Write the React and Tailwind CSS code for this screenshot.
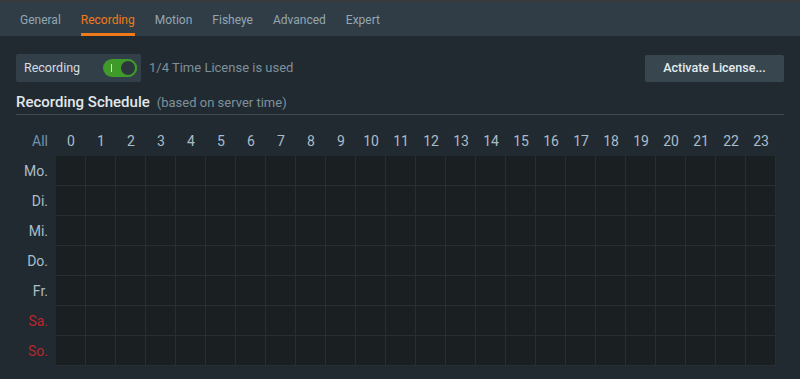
import { useState } from 'react';

const tabs = ['General', 'Recording', 'Motion', 'Fisheye', 'Advanced', 'Expert'];
const hours = Array.from({ length: 24 }, (_, i) => i);
const days = [
  { label: 'Mo.', weekend: false },
  { label: 'Di.', weekend: false },
  { label: 'Mi.', weekend: false },
  { label: 'Do.', weekend: false },
  { label: 'Fr.', weekend: false },
  { label: 'Sa.', weekend: true },
  { label: 'So.', weekend: true },
];

function Toggle() {
  return (
    <div className="relative w-[34px] h-[18px] rounded-full bg-[#3f9a2a]">
      <span className="absolute left-[8px] top-[5px] w-px h-[8px] bg-[#c9e8bf]" />
      <span className="absolute right-0 top-0 w-[18px] h-[18px] rounded-full bg-[#2b363d] border-2 border-[#3f9a2a]" />
    </div>
  );
}

export default function App() {
  const [active] = useState('Recording');

  return (
    <div
      className="w-[800px] h-[379px] bg-[#222a31] overflow-hidden"
      style={{ fontFamily: 'Roboto, "Noto Sans", sans-serif' }}
    >
      <div className="h-[2px] bg-[#3a3b3d]" />
      <div className="h-[34px] bg-[#303d46] flex items-stretch gap-[20px] pl-[20px] text-[12px]">
        {tabs.map((t) => (
          <div
            key={t}
            className={
              t === active
                ? 'flex items-center pt-[4px] text-[#f07a1a] border-b-[3px] border-[#f07a1a]'
                : 'flex items-center pt-[4px] text-[#93a7b3] border-b-[3px] border-transparent'
            }
          >
            {t}
          </div>
        ))}
      </div>

      <div className="px-4 pt-[18px]">
        <div className="flex items-center justify-between">
          <div className="flex items-center">
            <div className="h-[28px] w-[125px] bg-[#333f48] rounded-[2px] flex items-center justify-between pl-2 pr-[4px]">
              <span className="text-[12.5px] text-[#d3dde3]">Recording</span>
              <Toggle />
            </div>
            <span className="ml-2 text-[13px] text-[#7e909b]">1/4 Time License is used</span>
          </div>
          <button className="h-[27px] w-[139px] bg-[#37464f] rounded-[2px] text-[12.5px] font-medium text-[#e4ecf0]">
            Activate License...
          </button>
        </div>

        <div className="mt-[11px] flex items-baseline border-b border-[#3b4a53] pb-[2px] leading-[18px]">
          <span className="text-[15px] font-medium text-[#e1e8ec]">Recording Schedule</span>
          <span className="ml-[7px] text-[13px] text-[#7e909b]">(based on server time)</span>
        </div>

        <div className="mt-[12px]">
          <div className="flex h-[29px] items-center text-[14px] text-[#a9bdc9]">
            <div className="w-[40px] pr-2 text-right text-[#6f93ad]">All</div>
            {hours.map((h) => (
              <div key={h} className="w-[30px] text-center">
                {h}
              </div>
            ))}
          </div>
          {days.map((d) => (
            <div key={d.label} className="flex h-[30px]">
              <div
                className={
                  d.weekend
                    ? 'w-[40px] pr-2 flex items-center justify-end text-[14px] text-[#b8262c]'
                    : 'w-[40px] pr-2 flex items-center justify-end text-[14px] text-[#a9bdc9]'
                }
              >
                {d.label}
              </div>
              <div className="flex bg-[#1a1f22]">
                {hours.map((h) => (
                  <div
                    key={h}
                    className="w-[30px] h-[30px] border-r border-b border-[#282f34]"
                  />
                ))}
              </div>
            </div>
          ))}
        </div>
      </div>
    </div>
  );
}
